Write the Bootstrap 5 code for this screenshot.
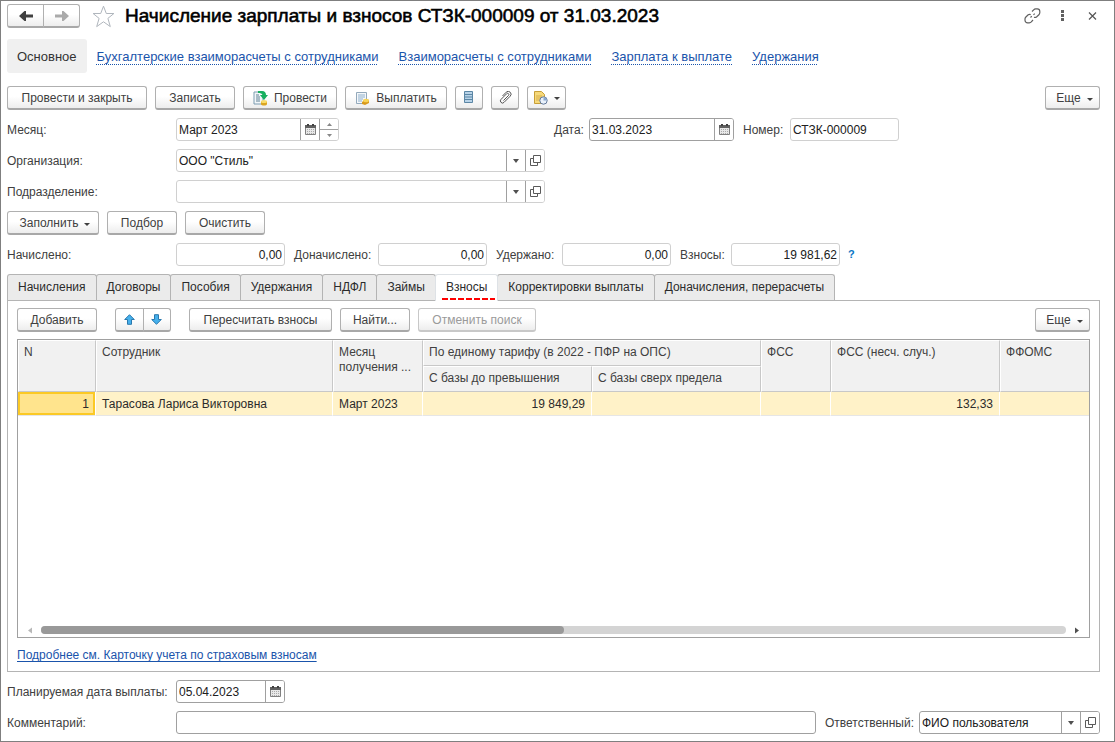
<!DOCTYPE html>
<html lang="ru">
<head>
<meta charset="utf-8">
<meta name="viewport" content="width=device-width, initial-scale=1">
<title>Начисление зарплаты и взносов</title>
<link rel="stylesheet" href="https://cdn.jsdelivr.net/npm/bootstrap@5.3.0/dist/css/bootstrap.min.css">
<style>
  :root { --ink: #404040; --line: #a0a0a0; --line-soft: #d0d0d0; --link: #1a54ab; }
  body { font-family: "Liberation Sans", Arial, sans-serif; font-size: 12px; line-height: 15px; color: var(--ink); background: #fff; }
  .doc-window { border: 1px solid #7f7f7f; padding: 1px 14px 7px 6px; }
  .doc-head { min-height: 28px; margin-bottom: 9px; }
  .doc-title { font-size: 19px; line-height: 26px; color: #000; font-weight: 400; padding-left: 10px; -webkit-text-stroke: .03em #000; }

  /* Buttons */
  .btn-1c { --bs-btn-font-size: 12px; --bs-btn-line-height: 15px; --bs-btn-color: #404040; --bs-btn-border-color: #b0b0b0; --bs-btn-border-radius: 3px; --bs-btn-hover-color: #202020; --bs-btn-hover-border-color: #909090; --bs-btn-disabled-color: #9a9a9a; --bs-btn-disabled-border-color: #c8c8c8; --bs-btn-disabled-opacity: 1;
    display: inline-flex; align-items: center; justify-content: center; gap: 6px; height: 24px; padding: 2px 8px 0; white-space: nowrap;
    background: linear-gradient(#fff 45%, #ededed); border-bottom: 2px solid #a8a8a8; }
  .btn-1c:disabled { border-bottom-color: #c8c8c8; }
  .btn-1c.dropdown-toggle::after { border-top: 3px solid #404040; border-right: 3px solid transparent; border-left: 3px solid transparent; border-bottom: 0; margin: 1px 0 0; }
  .btn-icon { width: 28px; padding: 0; }
  .btn-history { width: 39px; padding: 0; }
  .btn-xs { width: 55px; padding: 2px 0 0 4px; }
  .btn-s { width: 70px; }
  .btn-m { width: 80px; }
  .btn-l { width: 94px; }
  .btn-fill { width: 92px; padding: 2px 0 0 4px; }
  .btn-xl { width: 102px; }
  .btn-xxl { width: 118px; }
  .btn-wide { width: 140px; }
  .btn-recalc { width: 143px; }
  .btn-nav { width: 37px; padding: 0; }
  .btn-order { width: 56px; margin: 0 10px; }
  .btn-plain { border: 0; background: none; padding: 0; color: #404040; display: flex; align-items: center; }
  .btn-help { color: #0a76c4; font-size: 11px; font-weight: 700; }

  /* Section links */
  .nav-doc .nav-link { font-size: 13px; padding: 10px 10px 8px; color: #333; border-radius: 3px; line-height: 16px; }
  .nav-doc .nav-link.active { background: #f0f0f0; }
  .nav-doc .doc-link { color: var(--link); text-decoration: underline dotted 1px var(--link); text-underline-offset: 3px; }
  .text-link { color: var(--link); text-underline-offset: 2px; }

  /* Form fields */
  label { padding-top: 2px; }
  .label-col { width: 169px; flex: none; }
  .field { display: flex; height: 23px; border: 1px solid var(--line-soft); border-radius: 3px; background: #fff; overflow: hidden; }
  .field.strong { border-color: var(--line); }
  .field input, .field select { border: 0; outline: 0; background-color: transparent; color: #202020; padding: 2px 2px 0; min-width: 0; flex: 1; appearance: none; border-radius: 0; }
  .field .amount { text-align: right; }
  .field select { background: linear-gradient(var(--line), var(--line)) right 18px top / 1px 100% no-repeat, url("data:image/svg+xml,%3Csvg xmlns='http://www.w3.org/2000/svg' width='18' height='21'%3E%3Cpath d='M6 9h6l-3 4z' fill='%23505050'/%3E%3C/svg%3E") right top no-repeat; }
  .field button { border: 0; border-left: 1px solid var(--line); background: #fff; width: 19px; padding: 0; flex: none; display: flex; align-items: center; justify-content: center; }
  .field .spin { width: 19px; flex: none; display: flex; flex-direction: column; border-left: 1px solid var(--line); }
  .field .spin button { width: 100%; flex: 1; border-left: 0; }
  .field .spin button + button { border-top: 1px solid var(--line); }
  .w-month { width: 163px; }
  .w-ref { width: 369px; }
  .w-date { width: 145px; }
  .w-sum { width: 109px; }
  .w-user { width: 181px; }
  .form-rows { display: grid; gap: 8px; }
  .main-rows { padding-top: 5px; }
  .label-date { margin-left: 215px; width: 35px; }
  .label-number { width: 47px; margin-left: 9px; }
  .label-more { width: 84px; margin-left: 9px; }
  .label-held { width: 66px; margin-left: 9px; }
  .label-dues { width: 51px; margin-left: 9px; }
  .label-user { width: 94px; margin-left: 9px; }

  /* Tabs */
  .tabs-1c { --bs-nav-tabs-border-width: 0; }
  .tabs-1c .nav-link { background: #ebebeb; border: 1px solid #b4b4b4; border-bottom: 0; border-radius: 3px 3px 0 0; color: #2b2b2b; padding: 5px 10px; margin: 0 -1px 0 0; line-height: 15px; white-space: nowrap; }
  .tabs-1c .nav-link.active { background: #fff; color: #2b2b2b; position: relative; margin-bottom: -1px; padding-bottom: 6px; }
  .tabs-1c .nav-link.active::after { content: ""; position: absolute; left: 6px; right: 2px; bottom: 1px; height: 2px; background: repeating-linear-gradient(90deg, #f00 0 6px, transparent 6px 8px); }
  .tab-panel { border: 1px solid #b4b4b4; padding: 7px 9px 8px; }
  .panel-tools { margin-bottom: 7px; }
  .panel-foot { margin-top: 10px; }

  /* Contribution table */
  .grid-box { border: 1px solid var(--line); overflow: hidden; }
  .grid-1c { width: 100%; table-layout: fixed; border-collapse: separate; border-spacing: 0; }
  .grid-1c th { background: #f1f1f1; font-weight: 400; vertical-align: top; height: 26px; padding: 4px 5px; border: 1px solid #fff; border-right-color: #c8c8c8; border-bottom-color: #c8c8c8; white-space: nowrap; overflow: hidden; }
  .grid-1c td { background: #fff2c8; color: #2b2b2b; height: 24px; padding: 2px 6px 0; border-right: 1px solid #fff; border-bottom: 1px solid #e6e6e6; white-space: nowrap; overflow: hidden; }
  .grid-1c th.edge, .grid-1c td.edge { border-right: 0; }
  .grid-1c td.current { background: #ffe48d; box-shadow: inset 0 0 0 2px #fbc925; }
  .col-n { width: 78px; } .col-name { width: 237px; } .col-period { width: 90px; } .col-sum { width: 169px; } .col-fss { width: 70px; }
  .hscroll { padding: 0 9px 3px; gap: 8px; }
  .hscroll-track { height: 8px; border-radius: 4px; background: #d4d4d4; }
  .hscroll-thumb { height: 8px; border-radius: 4px; background: #999; }
</style>
</head>
<body>
<svg class="d-none" aria-hidden="true">
  <symbol id="i-cal" viewBox="0 0 11 11"><path d="M.5 1.500h10v9H.5z" fill="#e8e8e8" stroke="#808080"/><path d="M0 1h11v3H0z" fill="#606060"/><path d="M2 0h2v2H2zM7 0h2v2H7z" fill="#404040"/><path d="M2 5.500h7M2 7.500h7M2 9.500h7" stroke="#aaa" stroke-dasharray="1 1"/></symbol>
  <symbol id="i-open" viewBox="0 0 11 11"><path d="M3.500.5h7v7h-7zM3.500 3.500h-3v7h7v-3" fill="none" stroke="#5a5a5a"/></symbol>
  <symbol id="i-up" viewBox="0 0 5 3"><path d="M0 3h5L2.500 0z" fill="#888"/></symbol>
  <symbol id="i-down" viewBox="0 0 5 3"><path d="M0 0h5L2.500 3z" fill="#888"/></symbol>
</svg>
<main class="doc-window min-vh-100 d-flex flex-column">
  <header class="doc-head d-flex align-items-center">
    <div class="btn-group" role="group" aria-label="Навигация">
      <button type="button" class="btn btn-1c btn-nav" aria-label="Назад"><svg width="14" height="12" viewBox="0 0 14 12"><path d="M0 6l5.500-5H7v3.600h7v2.800H7V11H5.500z" fill="#404040"/></svg></button>
      <button type="button" class="btn btn-1c btn-nav" aria-label="Вперед"><svg width="14" height="12" viewBox="0 0 14 12"><path d="M14 6L8.500 1H7v3.600H0v2.800h7V11h1.500z" fill="#aaa"/></svg></button>
    </div>
    <button type="button" class="btn-plain ms-2 ps-1" aria-label="В избранное"><svg width="23" height="23" viewBox="0 0 23 23"><path d="M11.500 1.200l2.800 7.300h7.600l-6 4.900 2.400 8.200-6.800-4.800-6.800 4.800 2.400-8.200-6-4.900h7.600z" fill="#fff" stroke="#b0b6bd"/></svg></button>
    <h1 class="doc-title mb-0 flex-grow-1">Начисление зарплаты и взносов СТЗК-000009 от 31.03.2023</h1>
    <div class="d-flex align-items-center gap-3">
      <button type="button" class="btn-plain" aria-label="Ссылка"><svg width="18" height="16" viewBox="0 0 18 16" fill="none" stroke="#606060" stroke-width="1.200"><path d="M8 3.500l1.700-1.700a3.200 3.200 0 0 1 2-.9h1.600a2.600 2.600 0 0 1 2.500 2.600v1.300a3 3 0 0 1-.9 1.900L12.500 9a2.500 2.500 0 0 1-2.500.2M9 12l-1.700 1.900a3 3 0 0 1-2 .9H3.600A2.600 2.600 0 0 1 1 12.200v-1.300A3 3 0 0 1 1.900 9l2.300-2.200a2.500 2.500 0 0 1 2.500-.2M6.500 9.500l1.300-1.300M9.500 6.800l1.200-1.200"/></svg></button>
      <button type="button" class="btn-plain" aria-label="Действия"><svg width="10" height="12" viewBox="0 0 10 12" fill="#606060"><path d="M3 0h3v3H3zM3 4h3v3H3zM3 8h3v3H3z"/></svg></button>
      <button type="button" class="btn-plain" aria-label="Закрыть"><svg width="16" height="8" viewBox="0 0 16 8"><path d="M5 .5l7 7M12 .5l-7 7" stroke="#555" stroke-width="1.200"/></svg></button>
    </div>
  </header>

  <nav class="nav nav-doc align-items-center mb-2">
    <a class="nav-link active" href="#" aria-current="page">Основное</a>
    <a class="nav-link doc-link" href="#">Бухгалтерские взаиморасчеты с сотрудниками</a>
    <a class="nav-link doc-link" href="#">Взаиморасчеты с сотрудниками</a>
    <a class="nav-link doc-link" href="#">Зарплата к выплате</a>
    <a class="nav-link doc-link" href="#">Удержания</a>
  </nav>

  <div class="form-rows main-rows">
    <div class="d-flex gap-2">
      <button type="button" class="btn btn-1c btn-wide">Провести и закрыть</button>
      <button type="button" class="btn btn-1c btn-m">Записать</button>
      <button type="button" class="btn btn-1c btn-l"><svg width="15" height="15" viewBox="0 0 15 15"><path d="M1 1h9v12H1z" fill="#f2f6f9" stroke="#7d9cb0"/><path d="M3 4h3M3 6h4M3 8h4M3 10h4" stroke="#5f8094"/><path d="M5 0h4c3 0 4 2 4 4h2l-4 5-4-5h2.500C9 2.500 7.500 2 5 2z" fill="#18b060"/><path d="M8 10h6v3c0 2-6 2-6 0z" fill="#dba520"/><ellipse cx="11" cy="10.500" rx="3" ry="1.500" fill="#f8dc6c"/></svg>Провести</button>
      <button type="button" class="btn btn-1c btn-xl"><svg width="15" height="15" viewBox="0 0 15 15"><path d="M1.500 1.500h10v11h-10z" fill="#f4f7fa" stroke="#93a9bb"/><path d="M3 4h7M3 6h7M3 8h5M3 10h4" stroke="#8fb0cc"/><path d="M7 11l4-3 3 1v3l-4 2-3-1z" fill="#d99a1c"/><ellipse cx="11" cy="9.500" rx="3" ry="1.800" fill="#f8d456"/></svg>Выплатить</button>
      <button type="button" class="btn btn-1c btn-icon" aria-label="Движения документа"><svg width="10" height="13" viewBox="0 0 10 13"><path d="M.5.5h8v11h-8z" fill="#b8d3e8" stroke="#5b86a5"/><path d="M1 3.500h7M1 6h7M1 8.500h7" stroke="#5b86a5"/></svg></button>
      <button type="button" class="btn btn-1c btn-icon" aria-label="Присоединенные файлы"><svg width="13" height="13" viewBox="0 0 13 13" fill="none" stroke="#555"><path d="M4.500 9.500l5-5a1.200 1.200 0 0 0-1.800-1.800L2 8.400a2.100 2.100 0 0 0 3 3l6.200-6.200a2.800 2.800 0 0 0-4-4L3.500 5"/></svg></button>
      <button type="button" class="btn btn-1c btn-history dropdown-toggle" aria-label="Напоминания"><svg width="14" height="14" viewBox="0 0 14 14"><path d="M.5.5h7l3 3v9H.5z" fill="#f6d97a" stroke="#c79e37"/><path d="M2 5h6M2 7h5M2 9h4" stroke="#d7ae4b"/><circle cx="9.500" cy="9.500" r="3.700" fill="#e9f1fa" stroke="#61779a"/><path d="M9.500 9.500V6A3.500 3.500 0 0 1 13 9.500z" fill="#8aa8cf"/></svg></button>
      <button type="button" class="btn btn-1c btn-xs dropdown-toggle ms-auto">Еще</button>
    </div>

    <div class="d-flex align-items-center">
      <label class="label-col" for="month">Месяц:</label>
      <div class="field w-month">
        <input type="text" id="month" value="Март 2023">
        <button type="button" aria-label="Календарь"><svg width="11" height="11"><use href="#i-cal"/></svg></button>
        <span class="spin">
          <button type="button" aria-label="Следующий месяц"><svg width="5" height="3"><use href="#i-up"/></svg></button>
          <button type="button" aria-label="Предыдущий месяц"><svg width="5" height="3"><use href="#i-down"/></svg></button>
        </span>
      </div>
      <label class="label-date" for="docdate">Дата:</label>
      <div class="field strong w-date">
        <input type="text" id="docdate" value="31.03.2023">
        <button type="button" aria-label="Календарь"><svg width="11" height="11"><use href="#i-cal"/></svg></button>
      </div>
      <label class="label-number" for="docnum">Номер:</label>
      <div class="field w-sum"><input type="text" id="docnum" value="СТЗК-000009"></div>
    </div>

    <div class="d-flex align-items-center">
      <label class="label-col" for="org">Организация:</label>
      <div class="field w-ref">
        <select id="org"><option>ООО "Стиль"</option></select>
        <button type="button" aria-label="Открыть"><svg width="11" height="11"><use href="#i-open"/></svg></button>
      </div>
    </div>

    <div class="d-flex align-items-center">
      <label class="label-col" for="dept">Подразделение:</label>
      <div class="field w-ref">
        <select id="dept"><option></option></select>
        <button type="button" aria-label="Открыть"><svg width="11" height="11"><use href="#i-open"/></svg></button>
      </div>
    </div>

    <div class="d-flex gap-2">
      <button type="button" class="btn btn-1c btn-fill dropdown-toggle">Заполнить</button>
      <button type="button" class="btn btn-1c btn-s">Подбор</button>
      <button type="button" class="btn btn-1c btn-m">Очистить</button>
    </div>

    <div class="d-flex align-items-center">
      <label class="label-col" for="accrued">Начислено:</label>
      <div class="field w-sum"><input type="text" class="amount" id="accrued" value="0,00"></div>
      <label class="label-more" for="extra">Доначислено:</label>
      <div class="field w-sum"><input type="text" class="amount" id="extra" value="0,00"></div>
      <label class="label-held" for="held">Удержано:</label>
      <div class="field w-sum"><input type="text" class="amount" id="held" value="0,00"></div>
      <label class="label-dues" for="dues">Взносы:</label>
      <div class="field w-sum"><input type="text" class="amount" id="dues" value="19 981,62"></div>
      <button type="button" class="btn-plain btn-help ps-1 ms-1">?</button>
    </div>
  </div>

  <div class="nav nav-tabs tabs-1c mt-2" role="tablist">
    <button type="button" class="nav-link" role="tab">Начисления</button>
    <button type="button" class="nav-link" role="tab">Договоры</button>
    <button type="button" class="nav-link" role="tab">Пособия</button>
    <button type="button" class="nav-link" role="tab">Удержания</button>
    <button type="button" class="nav-link" role="tab">НДФЛ</button>
    <button type="button" class="nav-link" role="tab">Займы</button>
    <button type="button" class="nav-link active" role="tab" aria-selected="true">Взносы</button>
    <button type="button" class="nav-link" role="tab">Корректировки выплаты</button>
    <button type="button" class="nav-link" role="tab">Доначисления, перерасчеты</button>
  </div>

  <section class="tab-panel flex-grow-1 d-flex flex-column" role="tabpanel">
    <div class="panel-tools d-flex gap-2">
      <button type="button" class="btn btn-1c btn-m">Добавить</button>
      <div class="btn-group btn-order" role="group" aria-label="Порядок строк">
        <button type="button" class="btn btn-1c btn-icon" aria-label="Вверх"><svg width="11" height="11" viewBox="0 0 11 11"><path d="M5.500.7l4.800 4.800H7.500v4.800h-4V5.500H.7z" fill="#45b0ec" stroke="#2a78ad"/></svg></button>
        <button type="button" class="btn btn-1c btn-icon" aria-label="Вниз"><svg width="11" height="11" viewBox="0 0 11 11"><path d="M5.500 10.300L.7 5.500h2.800V.7h4v4.800h2.800z" fill="#45b0ec" stroke="#2a78ad"/></svg></button>
      </div>
      <button type="button" class="btn btn-1c btn-recalc">Пересчитать взносы</button>
      <button type="button" class="btn btn-1c btn-s">Найти...</button>
      <button type="button" class="btn btn-1c btn-xxl" disabled>Отменить поиск</button>
      <button type="button" class="btn btn-1c btn-xs dropdown-toggle ms-auto">Еще</button>
    </div>

    <div class="grid-box flex-grow-1 d-flex flex-column">
      <table class="grid-1c">
        <colgroup><col class="col-n"><col class="col-name"><col class="col-period"><col class="col-sum"><col class="col-sum"><col class="col-fss"><col class="col-sum"><col></colgroup>
        <thead>
          <tr><th rowspan="2">N</th><th rowspan="2">Сотрудник</th><th rowspan="2">Месяц<br>получения ...</th><th colspan="2">По единому тарифу (в 2022 - ПФР на ОПС)</th><th rowspan="2">ФСС</th><th rowspan="2">ФСС (несч. случ.)</th><th rowspan="2" class="edge">ФФОМС</th></tr>
          <tr><th>С базы до превышения</th><th>С базы сверх предела</th></tr>
        </thead>
        <tbody>
          <tr><td class="current text-end">1</td><td>Тарасова Лариса Викторовна</td><td>Март 2023</td><td class="text-end">19 849,29</td><td></td><td></td><td class="text-end">132,33</td><td class="edge"></td></tr>
        </tbody>
      </table>
      <div class="hscroll d-flex align-items-center mt-auto">
        <svg width="6" height="7" viewBox="0 0 6 7"><path d="M5 .5v6l-4-3z" fill="#b8b8b8"/></svg>
        <div class="hscroll-track flex-grow-1"><div class="hscroll-thumb" style="width: 51%"></div></div>
        <svg width="6" height="7" viewBox="0 0 6 7"><path d="M1 .5v6l4-3z" fill="#505050"/></svg>
      </div>
    </div>
    <div class="panel-foot"><a class="text-link" href="#">Подробнее см. Карточку учета по страховым взносам</a></div>
  </section>

  <div class="form-rows mt-2">
    <div class="d-flex align-items-center">
      <label class="label-col text-nowrap" for="paydate">Планируемая дата выплаты:</label>
      <div class="field strong w-sum">
        <input type="text" id="paydate" value="05.04.2023">
        <button type="button" aria-label="Календарь"><svg width="11" height="11"><use href="#i-cal"/></svg></button>
      </div>
    </div>
    <div class="d-flex align-items-center">
      <label class="label-col" for="comment">Комментарий:</label>
      <div class="field strong flex-grow-1"><input type="text" id="comment"></div>
      <label class="label-user" for="user">Ответственный:</label>
      <div class="field strong w-user">
        <select id="user"><option>ФИО пользователя</option></select>
        <button type="button" aria-label="Открыть"><svg width="11" height="11"><use href="#i-open"/></svg></button>
      </div>
    </div>
  </div>
</main>
<script src="https://cdn.jsdelivr.net/npm/bootstrap@5.3.0/dist/js/bootstrap.bundle.min.js"></script>
</body>
</html>
